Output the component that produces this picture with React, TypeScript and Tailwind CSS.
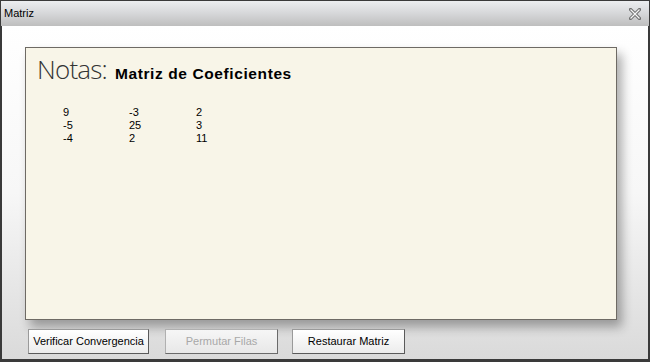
export default function App() {
  const rows = [
    ["9", "-3", "2"],
    ["-5", "25", "3"],
    ["-4", "2", "11"],
  ];

  return (
    <div className="w-[650px] h-[362px] flex flex-col bg-[#3a3a3a] font-['Liberation_Sans',Arial,sans-serif] overflow-hidden">
      {/* Title bar */}
      <div className="h-[25px] mx-px mt-px flex items-center justify-between pl-[3px] pr-[8px] bg-gradient-to-b from-[#eceef0] via-[#d6d7d9] to-[#bebebe]">
        <span className="text-[11px] text-black leading-none">Matriz</span>
        <svg width="12" height="12" viewBox="0 0 12 12" className="mt-[1px]">
          <path d="M1.5 1.5 L10.5 10.5 M10.5 1.5 L1.5 10.5" stroke="#707070" strokeWidth="3.2" strokeLinecap="square" />
          <path d="M1.5 1.5 L10.5 10.5 M10.5 1.5 L1.5 10.5" stroke="#f6f6f6" strokeWidth="1.2" />
        </svg>
      </div>

      {/* Window body */}
      <div className="flex-1 mx-[2px] mb-[3px] flex flex-col bg-gradient-to-b from-white via-[#f7f7f7] to-[#dadada] pl-[23px] pr-[31px] pt-[21px]">
        {/* Notes panel */}
        <div className="h-[273px] bg-[#f8f5e8] border border-[#6e6a64] shadow-[5px_7px_10px_rgba(0,0,0,0.32)] pl-[11px] pt-[8px]">
          <div className="flex items-baseline">
            <span className="font-['Open_Sans',sans-serif] font-light text-[26px] tracking-[-0.8px] text-[#333333] leading-none">
              Notas:
            </span>
            <span className="ml-[8px] font-['Liberation_Sans',Arial,sans-serif] font-bold text-[15.5px] tracking-[0.6px] text-black leading-none">
              Matriz de Coeficientes
            </span>
          </div>
          <div className="mt-[24px] ml-[26px] flex flex-col text-[11px] leading-[13px] text-black">
            {rows.map((r, i) => (
              <div key={i} className="grid grid-cols-[66px_67px_40px]">
                {r.map((v, j) => (
                  <span key={j}>{v}</span>
                ))}
              </div>
            ))}
          </div>
        </div>

        {/* Buttons */}
        <div className="flex mt-[9px] ml-[3px] text-[11px]">
          <button className="h-[25px] w-[121px] bg-gradient-to-b from-white to-[#ececec] border border-[#9a9a9a] border-r-[#5a5a5a] border-b-[#5a5a5a] text-black">
            Verificar Convergencia
          </button>
          <button className="h-[25px] w-[113px] ml-[16px] bg-gradient-to-b from-[#f6f6f6] to-[#e8e8e8] border border-[#b0b0b0] border-r-[#6a6a6a] border-b-[#6a6a6a] text-[#a8a8a8]">
            Permutar Filas
          </button>
          <button className="h-[25px] w-[113px] ml-[14px] bg-gradient-to-b from-white to-[#ececec] border border-[#9a9a9a] border-r-[#5a5a5a] border-b-[#5a5a5a] text-black">
            Restaurar Matriz
          </button>
        </div>
      </div>
    </div>
  );
}
